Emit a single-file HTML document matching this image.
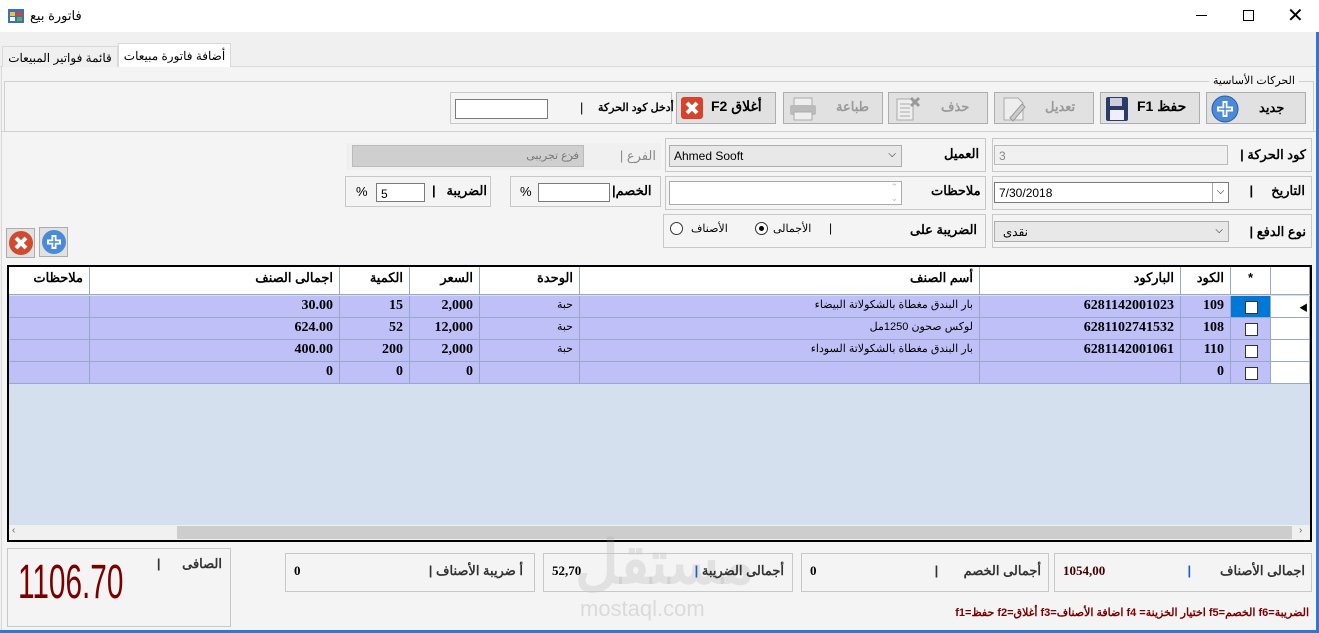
<!DOCTYPE html>
<html><head><meta charset="utf-8"><style>
*{box-sizing:border-box;margin:0;padding:0}
body{width:1319px;height:633px;background:#f0f0f0;font-family:"Liberation Sans","Noto Sans CJK SC",sans-serif;font-size:12px;color:#000;position:relative;overflow:hidden}
.a{position:absolute}
.box{position:absolute;border:1px solid #c8c8c8;background:#f4f4f4}
.btn{position:absolute;border:1px solid #adadad;background:#e1e1e1;font-weight:bold;font-size:14px}
.in{position:absolute;border:1px solid #7a7a7a;background:#fff;font-size:12px;padding:3px 4px}
.lbl{position:absolute;font-weight:bold;font-size:13px;direction:rtl;white-space:nowrap}
.grid div.c{position:absolute;border-right:1px solid #9aa8c8;border-bottom:1px solid #9aa8c8;font-size:13px;padding:3px 6px;white-space:nowrap;overflow:hidden}
.cb{position:absolute;width:13px;height:13px;border:1px solid #333;background:#fff}
</style></head><body>
<div class="a" style="left:0;top:0;width:1319px;height:32px;background:#fff"></div>
<svg class="a" style="left:8px;top:9px" width="16" height="14"><rect x="0" y="0" width="16" height="14" fill="#3a6fc4"/><rect x="2" y="3" width="5" height="4" fill="#f4c030"/><rect x="9" y="3" width="5" height="4" fill="#e04020"/><rect x="2" y="8" width="5" height="4" fill="#fff"/><rect x="9" y="8" width="5" height="4" fill="#60b040"/></svg>
<div class="a" style="left:30px;top:8px;font-size:13px">فاتورة بيع</div>
<div class="a" style="left:1196px;top:15px;width:11px;height:1px;background:#000"></div>
<div class="a" style="left:1243px;top:10px;width:11px;height:11px;border:1px solid #000"></div>
<div class="a" style="left:1287px;top:3px;font-size:20px;font-weight:300">✕</div>
<div class="a" style="left:0;top:66px;width:1317px;height:1px;background:#d9d9d9"></div>
<div class="a" style="left:2px;top:46px;width:116px;height:21px;border:1px solid #d9d9d9;border-bottom:none;background:#f0f0f0;font-size:12px;text-align:center;padding-top:4px">قائمة فواتير المبيعات</div>
<div class="a" style="left:118px;top:43px;width:113px;height:24px;border:1px solid #d9d9d9;border-bottom:none;background:#fff;font-size:12px;text-align:center;padding-top:5px">أضافة فاتورة مبيعات</div>
<div class="a" style="left:1px;top:67px;width:1315px;height:564px;background:#f4f4f4;border-left:1px solid #d9d9d9"></div>
<div class="a" style="left:1316px;top:32px;width:3px;height:601px;background:#2b78d6"></div>
<div class="a" style="left:0;top:630px;width:1319px;height:3px;background:#2b78d6"></div>
<div class="a" style="left:4px;top:81px;width:1310px;height:50px;border:1px solid #d0d0d0;border-bottom:none"></div>
<div class="a" style="left:1209px;top:74px;background:#f4f4f4;padding:0 4px;font-size:11px">الحركات الأساسية</div>
<div class="box" style="left:450px;top:92px;width:222px;height:32px"></div>
<div class="in" style="left:455px;top:99px;width:93px;height:20px"></div>
<div class="a" style="left:580px;top:100px;font-size:13px">|</div>
<div class="lbl" style="left:598px;top:101px;font-size:11px">أدخل كود الحركة</div>
<div class="btn" style="left:676px;top:92px;width:100px;height:32px"><svg class="a" style="left:4px;top:4px" width="22" height="22"><rect width="22" height="22" rx="3" fill="#d8422a"/><path d="M6 6L16 16M16 6L6 16" stroke="#fff" stroke-width="4"/></svg><span class="a" style="left:34px;top:5px">F2 أغلاق</span></div>
<div class="btn" style="left:783px;top:92px;width:100px;height:32px;color:#999"><svg class="a" style="left:4px;top:4px" width="30" height="24"><rect x="6" y="1" width="18" height="8" fill="#eee" stroke="#aaa"/><rect x="2" y="8" width="26" height="10" rx="2" fill="#bbb"/><rect x="6" y="15" width="18" height="8" fill="#eee" stroke="#aaa"/></svg><span class="a" style="left:52px;top:6px;font-size:13px">طباعة</span></div>
<div class="btn" style="left:888px;top:92px;width:100px;height:32px;color:#999"><svg class="a" style="left:6px;top:3px" width="26" height="26"><rect x="2" y="3" width="16" height="21" fill="#eee" stroke="#aaa"/><path d="M5 8h10M5 12h10M5 16h10M5 20h10" stroke="#aaa"/><path d="M16 2l8 8M24 2l-8 8" stroke="#999" stroke-width="3"/></svg><span class="a" style="left:52px;top:6px;font-size:13px">حذف</span></div>
<div class="btn" style="left:994px;top:92px;width:100px;height:32px;color:#999"><svg class="a" style="left:6px;top:3px" width="26" height="26"><path d="M3 2h14l5 5v17H3z" fill="#eee" stroke="#aaa"/><path d="M9 22l12-14 3 3-12 14z" fill="#ccc" stroke="#999"/></svg><span class="a" style="left:50px;top:6px;font-size:13px">تعديل</span></div>
<div class="btn" style="left:1100px;top:92px;width:100px;height:32px"><svg class="a" style="left:4px;top:3px" width="24" height="26"><rect x="1" y="1" width="22" height="24" rx="2" fill="#2a3a6a"/><rect x="5" y="2" width="12" height="8" fill="#ccd"/><rect x="5" y="14" width="14" height="10" fill="#eef"/></svg><span class="a" style="left:36px;top:5px">F1 حفظ</span></div>
<div class="btn" style="left:1206px;top:92px;width:100px;height:32px"><svg class="a" style="left:4px;top:2px" width="28" height="28"><circle cx="14" cy="14" r="13" fill="#4a8ad8" stroke="#2a5aa8"/><path d="M14 6v16M6 14h16" stroke="#fff" stroke-width="5"/><path d="M14 8v12M8 14h12" stroke="#4a8ad8" stroke-width="1.5"/></svg><span class="a" style="left:52px;top:7px;font-size:13px">جديد</span></div>
<div class="a" style="left:1px;top:131px;width:1315px;height:1px;background:#d0d0d0"></div>
<!-- row 1 -->
<div class="box" style="left:992px;top:138px;width:320px;height:34px"></div>
<div class="in" style="left:994px;top:145px;width:234px;height:20px;background:#f0f0f0;border-color:#bbb;color:#888">3</div>
<div class="lbl" style="right:13px;top:147px">كود الحركة |</div>
<div class="box" style="left:665px;top:138px;width:321px;height:34px"></div>
<div class="in" style="left:669px;top:145px;width:233px;height:22px;background:#e8e8e8;border-color:#adadad">Ahmed Sooft<span class="a" style="right:5px;top:3px;font-size:10px">⌵</span></div>
<div class="lbl" style="left:944px;top:146px">العميل</div>
<div class="a" style="left:346px;top:143px;width:315px;height:27px;background:#f0f0f0"></div>
<div class="in" style="left:352px;top:145px;width:232px;height:22px;background:#cfcfcf;border-color:#bbb;color:#777;font-size:11px;text-align:right">فرع تجريبى<span class="a" style="left:215px;top:3px">⌵</span></div>
<div class="lbl" style="right:663px;top:148px;color:#888;font-weight:normal">الفرع |</div>
<!-- row 2 -->
<div class="box" style="left:992px;top:176px;width:320px;height:34px"></div>
<div class="in" style="left:994px;top:182px;width:235px;height:21px">7/30/2018<span class="a" style="right:0;top:0;width:16px;height:19px;border-left:1px solid #aaa;text-align:center;padding-top:3px;font-size:10px">⌵</span></div>
<div class="lbl" style="right:14px;top:183px">التاريخ &nbsp;&nbsp;&nbsp;&nbsp;|</div>
<div class="box" style="left:665px;top:176px;width:321px;height:34px"></div>
<div class="in" style="left:669px;top:181px;width:233px;height:24px;border-color:#aaa"><span class="a" style="right:3px;top:0;color:#bbb;font-size:9px;line-height:11px">⌃<br>⌄</span></div>
<div class="lbl" style="left:931px;top:183px">ملاحظات</div>
<div class="box" style="left:510px;top:176px;width:151px;height:31px"></div>
<div class="in" style="left:538px;top:183px;width:72px;height:19px"></div>
<div class="a" style="left:520px;top:184px;font-size:13px">%</div>
<div class="lbl" style="left:612px;top:183px">الخصم|</div>
<div class="box" style="left:345px;top:176px;width:146px;height:31px"></div>
<div class="in" style="left:376px;top:183px;width:49px;height:19px">5</div>
<div class="a" style="left:356px;top:184px;font-size:13px">%</div>
<div class="lbl" style="right:832px;top:183px">الضريبة &nbsp;&nbsp;|</div>
<!-- row 3 -->
<div class="box" style="left:992px;top:214px;width:320px;height:34px"></div>
<div class="in" style="left:994px;top:221px;width:235px;height:21px;background:#e8e8e8;border-color:#adadad;text-align:right;padding-right:200px">نقدى<span class="a" style="right:5px;top:3px;font-size:10px">⌵</span></div>
<div class="lbl" style="right:13px;top:224px">نوع الدفع |</div>
<div class="box" style="left:663px;top:214px;width:323px;height:34px"></div>
<div class="lbl" style="left:910px;top:222px">الضريبة على</div>
<div class="a" style="left:829px;top:221px">|</div>
<div class="a" style="left:755px;top:222px;width:13px;height:13px;border:1px solid #333;border-radius:50%;background:#fff"><div class="a" style="left:3px;top:3px;width:5px;height:5px;border-radius:50%;background:#000"></div></div>
<div class="a" style="left:773px;top:222px;font-size:11px">الأجمالى</div>
<div class="a" style="left:670px;top:222px;width:13px;height:13px;border:1px solid #333;border-radius:50%;background:#fff"></div>
<div class="a" style="left:691px;top:222px;font-size:11px">الأصناف</div>
<div class="btn" style="left:6px;top:228px;width:29px;height:30px"><svg class="a" style="left:1px;top:1px" width="26" height="26"><circle cx="13" cy="13" r="12" fill="#d04a30"/><path d="M8 8l10 10M18 8L8 18" stroke="#fff" stroke-width="4"/></svg></div>
<div class="btn" style="left:39px;top:227px;width:29px;height:30px"><svg class="a" style="left:1px;top:1px" width="26" height="26"><circle cx="13" cy="13" r="12" fill="#4a8ad8"/><path d="M13 6v14M6 13h14" stroke="#fff" stroke-width="5"/><path d="M13 8v10M8 13h10" stroke="#4a8ad8" stroke-width="1.5"/></svg></div>
<!-- grid -->
<div class="a grid" style="left:7px;top:265px;width:1305px;height:277px;border:2px solid #000;background:#d4e0ee;direction:ltr">
<div class="a" style="left:0;top:0;width:1301px;height:28px;background:#fff;border-bottom:1px solid #9aa8c8"></div>
<div class="c" style="left:0;top:0;width:81px;height:28px;font-weight:bold;text-align:right">ملاحظات</div>
<div class="c" style="left:81px;top:0;width:250px;height:28px;font-weight:bold;text-align:right">اجمالى الصنف</div>
<div class="c" style="left:331px;top:0;width:70px;height:28px;font-weight:bold;text-align:right">الكمية</div>
<div class="c" style="left:401px;top:0;width:70px;height:28px;font-weight:bold;text-align:right">السعر</div>
<div class="c" style="left:471px;top:0;width:100px;height:28px;font-weight:bold;text-align:right">الوحدة</div>
<div class="c" style="left:571px;top:0;width:400px;height:28px;font-weight:bold;text-align:right">أسم الصنف</div>
<div class="c" style="left:971px;top:0;width:201px;height:28px;font-weight:bold;text-align:right">الباركود</div>
<div class="c" style="left:1172px;top:0;width:50px;height:28px;font-weight:bold;text-align:right">الكود</div>
<div class="c" style="left:1222px;top:0;width:40px;height:28px;font-weight:bold;text-align:center">*</div>
<div class="c" style="left:1262px;top:0;width:39px;height:28px"></div>
</div>
<script>
var rows=[["30.00","15","2,000","حبة","بار البندق مغطاة بالشكولاتة البيضاء","6281142001023","109"],["624.00","52","12,000","حبة","لوكس صحون 1250مل","6281102741532","108"],["400.00","200","2,000","حبة","بار البندق مغطاة بالشكولاتة السوداء","6281142001061","110"],["0","0","0","","","","0"]];
var cols=[[0,81],[81,250],[331,70],[401,70],[471,100],[571,400],[971,201],[1172,50]];
var h='';
rows.forEach(function(r,i){var t=29+i*22;
h+='<div class="a" style="left:0;top:'+t+'px;width:1262px;height:22px;background:#c0c0f8"></div>';
h+='<div class="c" style="left:0;top:'+t+'px;width:81px;height:22px"></div>';
for(var j=0;j<7;j++){var c=cols[j+1];var fs=(j==3||j==4)?'font-size:11px;':'font-weight:bold;font-family:Liberation Serif,serif;font-size:14px;';
h+='<div class="c" style="left:'+c[0]+'px;top:'+t+'px;width:'+c[1]+'px;height:22px;text-align:right;padding-top:2px;'+fs+'">'+r[j]+'</div>';}
h+='<div class="c" style="left:1222px;top:'+t+'px;width:40px;height:22px;'+(i==0?'background:#0078d7':'')+'"></div><div class="cb" style="left:1236px;top:'+(t+5)+'px"></div>';
h+='<div class="c" style="left:1262px;top:'+t+'px;width:39px;height:22px;background:#fff">'+(i==0?'<span style="font-size:9px;position:absolute;left:28px;top:5px">◀</span>':'')+'</div>';});
h+='<div class="a" style="left:0;top:258px;width:1301px;height:15px;background:#f0f0f0"></div><div class="a" style="left:168px;top:259px;width:1115px;height:13px;background:#cdcdcd"></div><div class="a" style="left:3px;top:258px;font-size:10px;color:#666">‹</div><div class="a" style="left:1290px;top:258px;font-size:10px;color:#666">›</div>';
document.querySelector('.grid').insertAdjacentHTML('beforeend',h);
</script>
<!-- bottom -->
<div class="a" style="left:575px;top:528px;font-size:60px;color:rgba(160,160,160,.22);font-weight:bold;direction:rtl">مستقل</div>
<div class="a" style="left:580px;top:596px;font-size:22px;color:rgba(160,160,160,.3)">mostaql.com</div>
<div class="box" style="left:7px;top:548px;width:224px;height:79px;background:transparent"></div>
<div class="a" style="left:18px;top:555px;font-size:48px;color:#7a0000;font-family:'Liberation Sans',sans-serif;transform:scaleX(.62);transform-origin:left">1106.70</div>
<div class="lbl" style="right:1097px;top:556px;color:#333">الصافى &nbsp;&nbsp;&nbsp;&nbsp;&nbsp;|</div>
<div class="box" style="left:285px;top:553px;width:250px;height:39px;background:transparent"></div>
<div class="a" style="left:294px;top:563px;font-weight:bold;font-size:13px;font-family:'Liberation Serif',serif">0</div>
<div class="lbl" style="right:796px;top:563px;color:#333">أ ضريبة الأصناف |</div>
<div class="box" style="left:543px;top:553px;width:250px;height:39px;background:transparent"></div>
<div class="a" style="left:552px;top:563px;font-weight:bold;font-size:13px;font-family:'Liberation Serif',serif">52,70</div>
<div class="lbl" style="right:535px;top:563px;color:#333">أجمالى الضريبة <span style="color:#2060c0">|</span></div>
<div class="box" style="left:801px;top:553px;width:248px;height:39px;background:transparent"></div>
<div class="a" style="left:810px;top:563px;font-weight:bold;font-size:13px;font-family:'Liberation Serif',serif">0</div>
<div class="lbl" style="right:278px;top:563px;color:#333">أجمالى الخصم &nbsp;&nbsp;&nbsp;&nbsp;&nbsp;&nbsp;|</div>
<div class="box" style="left:1054px;top:553px;width:258px;height:39px;background:transparent"></div>
<div class="a" style="left:1063px;top:563px;font-weight:bold;font-size:13px;font-family:'Liberation Serif',serif;color:#400000">1054,00</div>
<div class="lbl" style="right:14px;top:563px;color:#333">اجمالى الأصناف &nbsp;&nbsp;&nbsp;&nbsp;&nbsp;&nbsp;&nbsp;<span style="color:#2060c0">|</span></div>
<div class="a" style="right:10px;top:606px;font-size:11px;color:#7a0000;direction:rtl;white-space:nowrap;font-weight:bold">الضريبة=f6 الخصم=f5 اختيار الخزينة= f4 اضافة الأصناف=f3 أغلاق=f2 حفظ=f1</div>
</body></html>
